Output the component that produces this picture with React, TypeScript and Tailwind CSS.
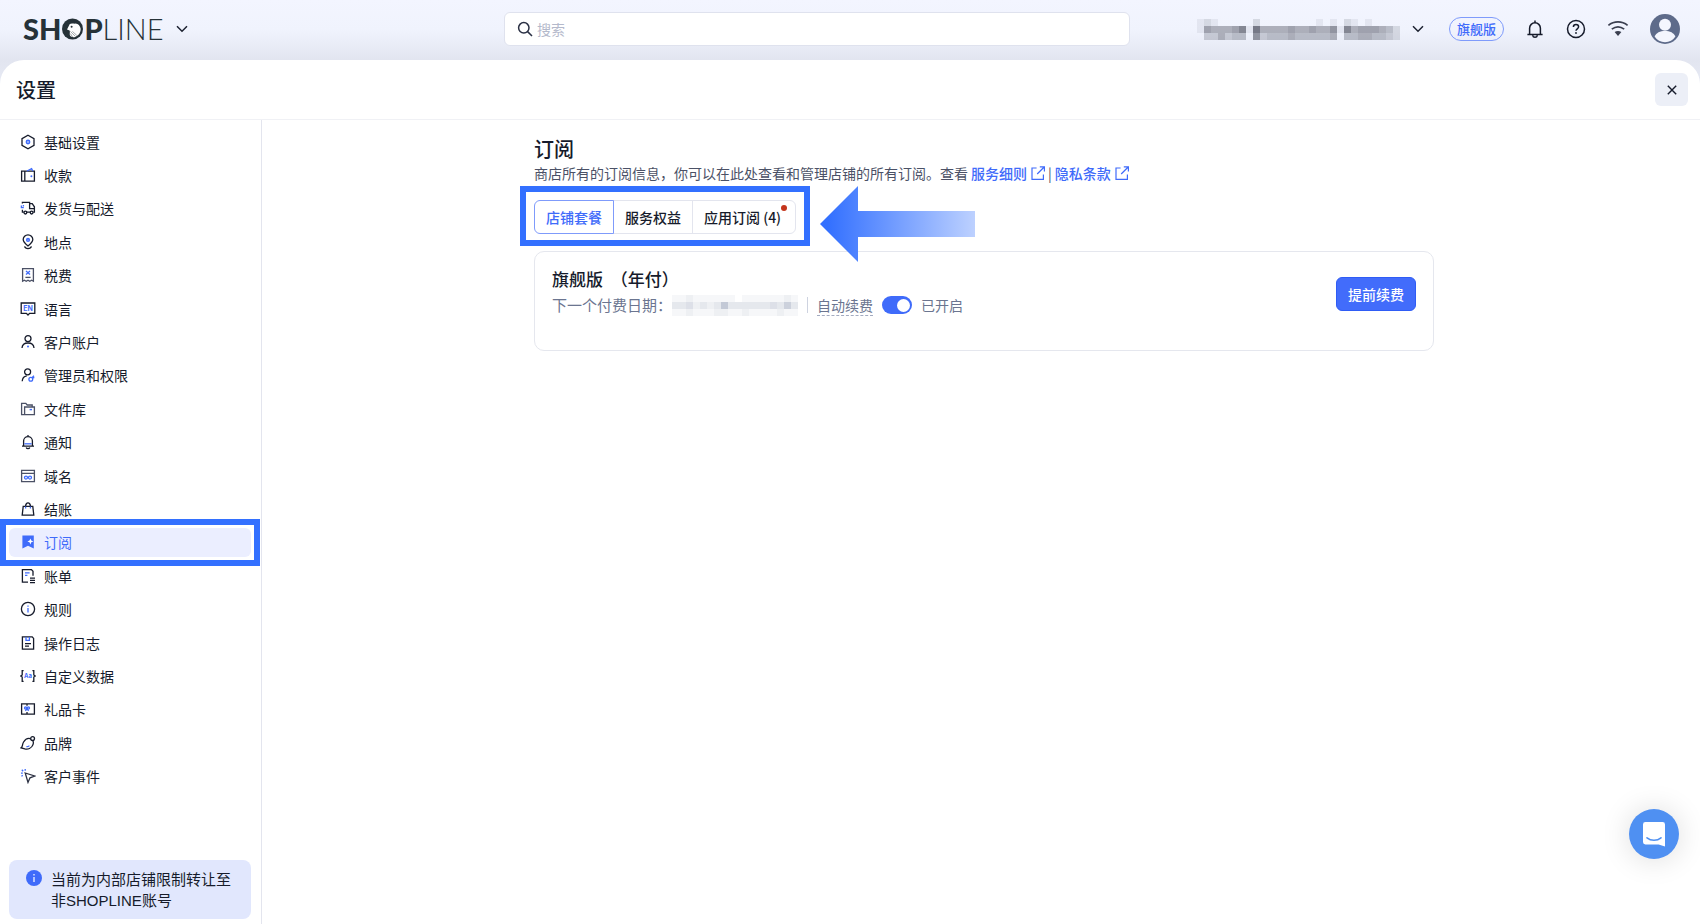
import { useState } from "react";
import type { ReactNode } from "react";
import clsx from "clsx";

type MenuItem = {
  id: string;
  label: string;
  icon: ReactNode;
};

const BLUE = "#3f6bfa";

const menuItems: MenuItem[] = [
  {
    id: "general",
    label: "基础设置",
    icon: (
      <>
        <path d="M8 1.2 14 4.6v6.8L8 14.8 2 11.4V4.6z" />
        <circle cx="8" cy="8" r="1.6" stroke={BLUE} strokeWidth="1.6" />
      </>
    ),
  },
  {
    id: "payments",
    label: "收款",
    icon: (
      <>
        <path d="M1.6 4.2h12.8v10H1.6zM4.8 4.2v10" />
        <path d="M7 4 11.6 1.6 12.8 4" stroke={BLUE} />
        <circle cx="11.4" cy="9.2" r="1" fill={BLUE} stroke="none" />
      </>
    ),
  },
  {
    id: "shipping",
    label: "发货与配送",
    icon: (
      <>
        <path d="M2.4 3.4v-1h7.2v6.2h4.8M9.6 3.6h2.6l2.2 3.2v5.4h-1.2M2.4 9.8v2.4h1.4M7 12.2h3" />
        <circle cx="5.4" cy="12.6" r="1.4" />
        <circle cx="11.6" cy="12.6" r="1.4" />
        <path d="M1.4 5.6v2.6M.8 7.6h3M3.4 5v1.4" stroke={BLUE} />
      </>
    ),
  },
  {
    id: "locations",
    label: "地点",
    icon: (
      <>
        <path d="M8 12C5 9.6 3.2 7.8 3.2 5.6a4.8 4.8 0 0 1 9.6 0C12.8 7.8 11 9.6 8 12z" />
        <path d="M4.6 12.4c.4 1.4 1.8 2.2 3.4 2.2s3-.8 3.4-2.2" />
        <circle cx="8" cy="5.9" r="1.3" stroke={BLUE} strokeWidth="1.6" />
      </>
    ),
  },
  {
    id: "taxes",
    label: "税费",
    icon: (
      <>
        <path
          stroke="#4b5166"
          d="M2.6 1.6h10.8v12.6l-1.8-1-1.8 1-1.8-1-1.8 1-1.8-1-1.8 1z"
        />
        <path d="M6 4 10 7.6M10 4 6 7.6" stroke={BLUE} />
        <path d="M5.4 10.4h5.2" stroke="#4b5166" />
      </>
    ),
  },
  {
    id: "languages",
    label: "语言",
    icon: (
      <>
        <path d="M1.2 2h13.6v10.4H9.6L8 14l-1.6-1.6H1.2z" />
        <text
          x="8"
          y="9.6"
          textAnchor="middle"
          fill={BLUE}
          stroke="none"
          className="font-['Inter'] text-[7px] font-bold"
        >
          EN
        </text>
      </>
    ),
  },
  {
    id: "accounts",
    label: "客户账户",
    icon: (
      <>
        <circle cx="8" cy="4.6" r="3" />
        <path d="M2 14c.2-3.2 2.4-5 6-5s5.8 1.8 6 5" />
        <circle cx="8" cy="12.6" r="1" fill={BLUE} stroke="none" />
      </>
    ),
  },
  {
    id: "staff",
    label: "管理员和权限",
    icon: (
      <>
        <circle cx="7.6" cy="4.8" r="3" />
        <path d="M2.2 14.2c.2-3.4 1.8-5 4.6-5.4" />
        <circle cx="10.8" cy="12.2" r="1.9" stroke={BLUE} />
        <path d="m12 10.8 2-2M13 10l1.2 1.2" stroke={BLUE} />
      </>
    ),
  },
  {
    id: "files",
    label: "文件库",
    icon: (
      <>
        <path
          stroke="#4b5166"
          d="M4 13.6H1.6V2.4h4.2l1.4 1.6h5v2M4.6 13.6V6h9.8v7.6z"
        />
        <path d="M9.6 8.6H12" stroke={BLUE} strokeWidth="1.4" />
      </>
    ),
  },
  {
    id: "notifications",
    label: "通知",
    icon: (
      <>
        <path d="M3.6 12V7a4.4 4.4 0 0 1 8.8 0v5M2 12.2h12M8 2.4V1M6.2 13.4c.6 1.6 3 1.6 3.6 0" />
        <path d="M4.4 9.8h7.2" stroke={BLUE} />
      </>
    ),
  },
  {
    id: "domains",
    label: "域名",
    icon: (
      <>
        <path
          stroke="#4b5166"
          d="M1.6 2.4h12.8v11.2H1.6zM1.6 5.4h12.8"
        />
        <circle cx="6" cy="9.6" r="1.5" stroke={BLUE} />
        <circle cx="10" cy="9.6" r="1.5" stroke={BLUE} />
      </>
    ),
  },
  {
    id: "checkout",
    label: "结账",
    icon: (
      <>
        <path d="M3.2 5.4h9.6l1 8.8H2.2zM5.6 5.2C5.6.8 10.4.8 10.4 5.2" />
        <path d="M5.6 5.4v2M10.4 5.4v2" stroke={BLUE} />
      </>
    ),
  },
  {
    id: "subscription",
    label: "订阅",
    icon: (
      <>
        <path d="M2.4 1.4h11.4v13.2L8 11.8l-5.6 2.8z" fill={BLUE} stroke="none" />
        <path
          d="m10.4 4.4.9 2.1 2.1.9-2.1.9-.9 2.1-.9-2.1-2.1-.9 2.1-.9z"
          fill="#fff"
          stroke="none"
        />
      </>
    ),
  },
  {
    id: "billing",
    label: "账单",
    icon: (
      <>
        <path d="M8 14.2H2.4V1.6h9l1.6 1.6v4.6" />
        <path d="M5 4.8h4.6M5 7.4h2.4" stroke={BLUE} />
        <path d="M10 10.2h5M10 12.4h5M10 14.6h5" />
      </>
    ),
  },
  {
    id: "policies",
    label: "规则",
    icon: (
      <>
        <circle cx="8" cy="8" r="6.6" />
        <path d="M8 7v4.6M8 4.4v1.4" stroke={BLUE} />
      </>
    ),
  },
  {
    id: "logs",
    label: "操作日志",
    icon: (
      <>
        <path d="M2.4 1.8h9.8l1.4 1.6v10.8H2.4z" />
        <path d="M6 2v3.4h3.4V2" stroke={BLUE} />
        <path d="M5 8.6h6M5 11.2h4" />
      </>
    ),
  },
  {
    id: "metafields",
    label: "自定义数据",
    icon: (
      <>
        <path d="M3.6 2.6H2.2V7L.8 8l1.4 1v4.4h1.4M12.4 2.6h1.4V7l1.4 1-1.4 1v4.4h-1.4" />
        <text
          x="8"
          y="10.2"
          textAnchor="middle"
          fill={BLUE}
          stroke="none"
          className="font-['Inter'] text-[6px] font-bold"
        >
          Aa
        </text>
      </>
    ),
  },
  {
    id: "giftcards",
    label: "礼品卡",
    icon: (
      <>
        <path d="M1.6 2.8h12.8v10.4H1.6zM7 2.8v2M7 11v2" />
        <circle cx="5.6" cy="7" r="1.1" stroke={BLUE} />
        <circle cx="8.4" cy="7" r="1.1" stroke={BLUE} />
        <path d="m7 7.8-1.6 2M7 7.8l1.6 2" stroke={BLUE} />
      </>
    ),
  },
  {
    id: "brand",
    label: "品牌",
    icon: (
      <>
        <path d="M1.2 12.8C2.8 11.8 2 9.6 3.6 7c1.8-3 4.6-4 6.6-3.4 3 .8 3.8 3.8 2.6 6.4-1.4 3.2-4.8 4.6-8 3.8z" />
        <circle cx="12.6" cy="3.6" r="1.9" fill="#fff" />
        <path d="M6.4 11.6c1.2.2 2.2-.2 3-1" stroke={BLUE} />
      </>
    ),
  },
  {
    id: "events",
    label: "客户事件",
    icon: (
      <>
        <path stroke="#2b3042" d="m5.2 5 9.4 3-4.6 1.8L8 14.4z" />
        <path
          d="M1 5.2h1.8M5.2 1v1.8M1.8 1.8l1.4 1.4M2.8 7.4l-1.4.8"
          stroke={BLUE}
        />
      </>
    ),
  },
];

const storeNameMosaic = [
  "12100000200000000101021010000",
  "16555681955556556557185666542",
  "03353440734445444445044554432",
];

const dateMosaic = [
  "112111111011111121",
  "334232373333334363",
  "112111221121111211",
];

type MosaicProps = {
  rows: string[];
  color: string;
  step: number;
  label: string;
};

function Mosaic({ rows, color, step, label }: MosaicProps) {
  const width = rows[0].length * 7;
  const height = rows.length * 7;

  return (
    <svg
      width={width}
      height={height}
      role="img"
      aria-label={label}
      shapeRendering="crispEdges"
      className="shrink-0"
    >
      {rows.map((row, y) =>
        row.split("").map((level, x) => (
          <rect
            key={`${x}-${y}`}
            x={x * 7}
            y={y * 7}
            width="7"
            height="7"
            fill={color}
            fillOpacity={Number(level) * step}
          />
        )),
      )}
    </svg>
  );
}

function Chevron() {
  return (
    <svg
      width="12"
      height="8"
      viewBox="0 0 12 8"
      fill="none"
      stroke="#1c2130"
      strokeWidth="1.5"
    >
      <path d="m1 1.2 5 5 5-5" />
    </svg>
  );
}

function ExternalIcon() {
  return (
    <svg
      width="14"
      height="14"
      viewBox="0 0 14 14"
      fill="none"
      stroke={BLUE}
      strokeWidth="1.2"
    >
      <path d="M5.6 2H1v11.4h11.4V8.4M8.8.8h4.6v4.6M13.2 1 6.2 8" />
    </svg>
  );
}

function Logo() {
  return (
    <div className="flex items-center font-['Lato',sans-serif] text-[29px] leading-8 text-[#263238]">
      <span className="font-black">SH</span>
      <svg width="23" height="22" viewBox="0 0 23 22" role="img" aria-label="O">
        <circle cx="11.5" cy="11" r="10.5" fill="#263238" />
        <path
          d="M8.8 6C10.6 4.8 12.6 5.8 14.6 5.6c2.6.2 4.6 2.4 5 5 .4 3.800-2 7.200-5.400 8.400-2.200.8-4.200 0-5.200-1.400-.8-1.800.4-3.400-.4-5L6 11.400z"
          fill="#fff"
        />
        <circle cx="10.6" cy="8.8" r="1" fill="#263238" />
        <path
          d="m9.4 13.4 5 5M11.4 13.4l4.4 4M9.4 15.6l2.2 3.4"
          stroke="#263238"
          strokeWidth=".4"
          fill="none"
        />
      </svg>
      <span className="font-black">P</span>
      <span className="font-light">LINE</span>
    </div>
  );
}

function TopBar() {
  return (
    <header className="grid h-[60px] grid-cols-[504fr_626fr_570fr] items-center pb-[2px]">
      <div className="flex items-center gap-3 pl-[23px]">
        <Logo />
        <button type="button" aria-label="切换产品">
          <Chevron />
        </button>
      </div>

      <label className="flex h-[34px] items-center gap-1 rounded-md border border-[#dfe2ee] bg-white px-3">
        <svg
          width="16"
          height="16"
          viewBox="0 0 16 16"
          fill="none"
          stroke="#2a3044"
          strokeWidth="1.5"
          className="shrink-0"
        >
          <circle cx="6.8" cy="6.8" r="5.2" />
          <path d="m10.6 10.6 4.4 4.4" />
        </svg>
        <input
          type="text"
          aria-label="搜索"
          placeholder="搜索"
          className="w-full bg-transparent text-sm outline-none placeholder:text-[#b4b9cb]"
        />
      </label>

      <div className="flex items-center justify-end pr-5">
        <button type="button" className="flex items-center gap-3">
          <Mosaic
            rows={storeNameMosaic}
            color="#5a5d6b"
            step={0.09}
            label="店铺名称"
          />
          <Chevron />
        </button>
        <span className="ml-[25px] flex h-6 items-center rounded-full border border-[#7f9bfb] px-[7px] text-[13px] font-medium text-[#3f6bfa]">
          旗舰版
        </span>
        <div className="ml-[21px] flex items-center gap-[21px]">
          <button type="button" aria-label="消息">
            <svg
              width="20"
              height="20"
              viewBox="0 0 20 20"
              fill="none"
              stroke="#161b2b"
              strokeWidth="1.5"
            >
              <path d="M4.6 15.4V9.2a5.4 5.4 0 0 1 10.8 0v6.2M2.4 15.6h15.2M10 3.6V1.4M7.6 16.4c.6 2.6 4.2 2.6 4.8 0" />
            </svg>
          </button>
          <button type="button" aria-label="帮助">
            <svg
              width="20"
              height="20"
              viewBox="0 0 20 20"
              fill="none"
              stroke="#161b2b"
              strokeWidth="1.5"
            >
              <circle cx="10" cy="10" r="8.5" />
              <path d="M7.4 8c0-3.4 5.2-3.2 5.2-.2 0 2-2.6 2-2.6 4" />
              <circle cx="10" cy="14" r=".9" fill="#161b2b" stroke="none" />
            </svg>
          </button>
          <button type="button" aria-label="网络状态">
            <svg
              width="22"
              height="18"
              viewBox="0 0 22 18"
              fill="none"
              stroke="#3b3f50"
              strokeWidth="1.7"
            >
              <path d="M1.4 5.4c5.6-4.6 13.6-4.6 19.2 0M4.8 9.2c3.8-3 8.6-3 12.4 0" />
              <path
                d="M7.6 12c2.2-1.4 4.6-1.4 6.8 0L11 16z"
                fill="#3b3f50"
                stroke="none"
              />
            </svg>
          </button>
          <button type="button" aria-label="个人中心">
            <svg width="30" height="30" viewBox="0 0 30 30">
              <circle cx="15" cy="15" r="15" fill="#5e6b8a" />
              <circle cx="15" cy="10.8" r="6" fill="#f4f6fe" />
              <path
                d="M4.6 22.6c1.6-3.8 5.4-5.6 10.4-5.6s8.8 1.8 10.4 5.6C23 26.2 19.4 28.2 15 28.2S7 26.2 4.6 22.6z"
                fill="#f4f6fe"
              />
            </svg>
          </button>
        </div>
      </div>
    </header>
  );
}

function Sidebar() {
  return (
    <aside className="flex w-[262px] shrink-0 flex-col border-r border-[#e3e5ee] pt-[7px] pr-[10px] pb-[5px] pl-[9px]">
      <nav className="flex flex-1 flex-col justify-between">
        {menuItems.map((item) => {
          const active = item.id === "subscription";

          return (
            <a
              key={item.id}
              href={`#${item.id}`}
              className={clsx(
                "relative flex h-[29px] items-center gap-2 rounded-md pl-[11px] text-sm",
                active ? "bg-[#ebeeff] text-[#3f6bfa]" : "text-[#161b2b]",
              )}
            >
              <svg
                width="16"
                height="16"
                viewBox="0 0 16 16"
                fill="none"
                stroke="#161b2b"
                strokeWidth="1.3"
                className="shrink-0"
              >
                {item.icon}
              </svg>
              {item.label}
              {active && (
                <span className="pointer-events-none absolute -inset-[9px] border-6 border-[#3370ff]" />
              )}
            </a>
          );
        })}
      </nav>

      <div className="mt-[69px] flex gap-[9px] rounded-lg bg-[#e1e7fd] pt-2 pb-[9px] pl-[17px] text-[15px] leading-[21px] text-[#161b2b]">
        <svg width="16" height="16" viewBox="0 0 16 16" className="mt-[2px] shrink-0">
          <circle cx="8" cy="8" r="8" fill={BLUE} />
          <path d="M8 7v5M8 4v1.6" stroke="#fff" strokeWidth="1.2" />
        </svg>
        <p>
          当前为内部店铺限制转让至
          <br />非
          <span className="font-['Liberation_Sans'] leading-none">
            SHOPLINE
          </span>
          账号
        </p>
      </div>
    </aside>
  );
}

function PlanTabs() {
  const [tab, setTab] = useState("plan");

  const tabs = [
    { id: "plan", label: "店铺套餐" },
    { id: "benefits", label: "服务权益" },
    { id: "apps", label: "应用订阅 (4)" },
  ];

  return (
    <div className="relative mt-[17px] w-fit">
      <div className="flex h-[34px] text-sm font-medium" role="tablist">
        {tabs.map((item) => (
          <button
            key={item.id}
            type="button"
            role="tab"
            aria-selected={tab === item.id}
            onClick={() => setTab(item.id)}
            className={clsx(
              "relative -ml-px border px-[11px] first:ml-0 first:rounded-l-md last:rounded-r-md last:pr-[14px]",
              tab === item.id
                ? "z-10 border-[#7f9bfb] text-[#3f6bfa]"
                : "border-[#e3e5ee] text-[#161b2b]",
            )}
          >
            {item.label}
            {item.id === "apps" && (
              <span className="absolute top-1 right-2 size-1.5 rounded-full bg-[#c4351c]" />
            )}
          </button>
        ))}
      </div>
      <span className="pointer-events-none absolute -inset-x-[14px] -top-[14px] -bottom-3 border-6 border-[#3370ff]" />
      <svg
        width="155"
        height="76"
        viewBox="0 0 155 76"
        aria-hidden="true"
        className="pointer-events-none absolute -top-[14px] left-full z-10 ml-6"
      >
        <defs>
          <linearGradient id="arrow" x1="0" x2="1" y1="0" y2="0">
            <stop offset="0.05" stopColor="#3370ff" />
            <stop offset="1" stopColor="#bdd1ff" />
          </linearGradient>
        </defs>
        <path d="M0 38 38 0v25h117v26H38v25z" fill="url(#arrow)" />
      </svg>
    </div>
  );
}

function PlanCard() {
  return (
    <section className="mt-[17px] flex min-h-[100px] items-start justify-between rounded-[10px] border border-[#e5e7ee] px-[17px] pt-[15px]">
      <div>
        <h2 className="text-[17px] leading-6 font-medium text-[#161b2b]">
          旗舰版&nbsp;&nbsp;（年付）
        </h2>
        <div className="mt-[2px] flex h-6 items-center text-sm text-[#6b7590]">
          <span className="text-[15px]">下一个付费日期：</span>
          <Mosaic
            rows={dateMosaic}
            color="#7b88a5"
            step={0.065}
            label="付费日期"
          />
          <span className="mx-[9px] h-4 w-px bg-[#ced3e0]" />
          <label
            htmlFor="auto-renew"
            className="border-b border-dashed border-[#a3abc0] leading-5"
          >
            自动续费
          </label>
          <input
            id="auto-renew"
            type="checkbox"
            role="switch"
            defaultChecked
            className="mx-[9px] flex h-[18px] w-[30px] appearance-none items-center rounded-full bg-[#c5cad8] px-[2px] before:size-[13px] before:rounded-full before:bg-white checked:justify-end checked:bg-[#3f6bfa]"
          />
          <span>已开启</span>
        </div>
      </div>
      <button
        type="button"
        className="mt-[10px] h-[34px] rounded-md border border-[#2f5cf5] bg-[#426cfb] px-[11px] text-sm font-medium text-white"
      >
        提前续费
      </button>
    </section>
  );
}

function App() {
  return (
    <div className="flex min-h-screen flex-col bg-[linear-gradient(#f3f5ff_0,#f0f3fd_30px,#e2e5f0_60px,#e8ebf5_90px)] font-['Noto_Sans_CJK_SC',sans-serif]">
      <TopBar />

      <div className="flex flex-1 flex-col rounded-t-3xl bg-white">
        <div className="flex h-[60px] items-center justify-between border-b border-[#f0f1f5] pr-3 pl-4">
          <h1 className="text-xl font-medium text-[#161b2b]">设置</h1>
          <button
            type="button"
            aria-label="关闭"
            className="flex size-[33px] items-center justify-center rounded-md bg-[#eceff7]"
          >
            <svg
              width="10"
              height="10"
              viewBox="0 0 10 10"
              stroke="#161b2b"
              strokeWidth="1.4"
            >
              <path d="m.8.8 8.4 8.4M9.2.8.8 9.2" />
            </svg>
          </button>
        </div>

        <div className="flex flex-1">
          <Sidebar />

          <main className="flex-1 pt-[15px] pl-[6px]">
            <div className="mx-auto max-w-[900px]">
              <h2 className="text-xl leading-7 font-medium text-[#161b2b]">
                订阅
              </h2>
              <p className="flex items-center gap-[3px] text-sm leading-5 text-[#4b5166]">
                商店所有的订阅信息，你可以在此处查看和管理店铺的所有订阅。查看
                <a
                  href="#terms"
                  className="flex items-center gap-1 font-medium text-[#3f6bfa]"
                >
                  服务细则
                  <ExternalIcon />
                </a>
                <span>|</span>
                <a
                  href="#privacy"
                  className="flex items-center gap-1 font-medium text-[#3f6bfa]"
                >
                  隐私条款
                  <ExternalIcon />
                </a>
              </p>
              <PlanTabs />
              <PlanCard />
            </div>
          </main>
        </div>
      </div>

      <button
        type="button"
        aria-label="在线客服"
        className="fixed right-[21px] bottom-[65px] flex size-[50px] items-center justify-center rounded-full bg-[#4f90f2] shadow-[0_1px_30px_rgba(0,0,0,0.14)]"
      >
        <svg width="24" height="26" viewBox="0 0 24 26">
          <path
            d="M3.4 1h17.2A2.4 2.4 0 0 1 23 3.4V25.6l-6.4-2.2H3.4A2.4 2.4 0 0 1 1 21V3.4A2.4 2.4 0 0 1 3.4 1z"
            fill="#fff"
          />
          <path
            d="M5 16.8c4 3.2 10 3.2 14 0"
            fill="none"
            stroke="#4f90f2"
            strokeWidth="1.6"
            strokeLinecap="round"
          />
        </svg>
      </button>
    </div>
  );
}

export default App;
